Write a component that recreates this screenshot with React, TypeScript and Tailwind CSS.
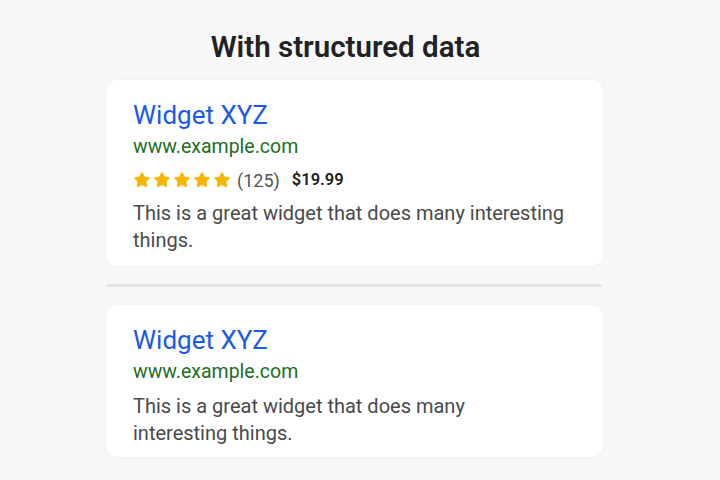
import { Star } from "lucide-react"

function Stars() {
  return (
    <div className="flex items-center gap-[2px]">
      {[0, 1, 2, 3, 4].map((i) => (
        <Star key={i} className="w-[18px] h-[18px] text-[#f7b500]" fill="#f7b500" strokeWidth={1} />
      ))}
    </div>
  )
}

function ResultCard({ rich }: { rich?: boolean }) {
  return (
    <div className="bg-white rounded-xl pl-[27px] pr-4 pt-[19px] shadow-[0_0_6px_rgba(0,0,0,0.03)]">
      <div className="text-[26px] leading-[32px] text-[#1a5ae6]">Widget XYZ</div>
      <div className="mt-[2px] text-[19.5px] leading-[28px] text-[#1d6e25]">www.example.com</div>
      {rich ? (
        <>
          <div className="mt-[4px] flex items-center h-[30px] text-[18px]">
            <Stars />
            <span className="ml-[6px] text-[#555]">(125)</span>
            <span className="ml-[12px] text-[16.5px] font-semibold text-[#222]">$19.99</span>
          </div>
          <p className="mt-[5px] pb-[12px] text-[20px] leading-[27px] text-[#4a4a4a]">
            This is a great widget that does many interesting things.
          </p>
        </>
      ) : (
        <p className="mt-[7px] pb-[10px] w-[370px] text-[20px] leading-[27px] text-[#4a4a4a]">
          This is a great widget that does many interesting things.
        </p>
      )}
    </div>
  )
}

export default function App() {
  return (
    <div
      className="w-[720px] h-[480px] bg-[#f8f8f8] flex flex-col items-center"
      style={{ fontFamily: "Roboto, 'Liberation Sans', sans-serif" }}
    >
      <div className="w-[497px] ml-[-11px]">
        <h1 className="pt-[30px] pr-[18px] text-center text-[29.5px] leading-[34px] font-semibold text-[#222]">
          With structured data
        </h1>
        <div className="mt-[16px]">
          <ResultCard rich />
        </div>
        <div className="mt-[18px] mx-[1px] h-[3px] bg-[#e3e3e3] rounded" />
        <div className="mt-[18px]">
          <ResultCard />
        </div>
      </div>
    </div>
  )
}
